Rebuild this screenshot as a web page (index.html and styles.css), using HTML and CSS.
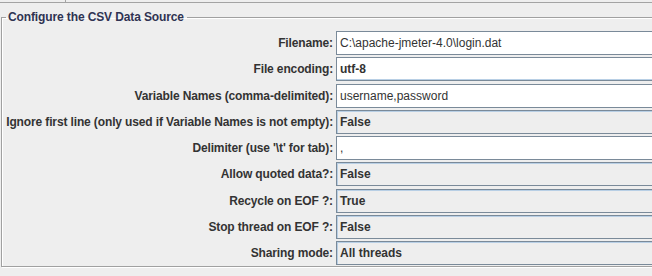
FILE: index.html
```html
<!DOCTYPE html>
<html lang="en">
<head>
<meta charset="UTF-8">
<title>CSV Data Set Config</title>
<link rel="stylesheet" href="styles.css">
</head>
<body>
    <div class="top-strip">
        <div class="top-tab"></div>
    </div>
    <fieldset class="group">
        <legend>Configure the CSV Data Source</legend>
        <div class="form">
            <label>Filename:</label>
            <div class="field text">C:\apache-jmeter-4.0\login.dat</div>

            <label>File encoding:</label>
            <div class="field edit-combo">utf-8</div>

            <label>Variable Names (comma-delimited):</label>
            <div class="field text">username,password</div>

            <label>Ignore first line (only used if Variable Names is not empty):</label>
            <div class="field combo">False</div>

            <label>Delimiter (use '\t' for tab):</label>
            <div class="field text">,</div>

            <label>Allow quoted data?:</label>
            <div class="field combo">False</div>

            <label>Recycle on EOF ?:</label>
            <div class="field combo">True</div>

            <label>Stop thread on EOF ?:</label>
            <div class="field combo">False</div>

            <label>Sharing mode:</label>
            <div class="field combo">All threads</div>
        </div>
    </fieldset>
</body>
</html>
```

FILE: styles.css
```css
body{
    margin:0;
    background:#eeeeee;
    font-family:"Liberation Sans", Arial, sans-serif;
    font-size:12px;
    color:#333333;
    overflow:hidden;
    width:652px;
    height:276px;
}

.top-strip{
    height:2px;
    border-bottom:1px solid #a3a3a3;
}
.top-tab{
    width:65px;
    height:2px;
    border-right:1px solid #a3a3a3;
}

.group{
    margin:7px 0 0 1px;
    padding:0 0 1px 0;
    width:700px;
    border:1px solid #a0a0a0;
    box-shadow:inset 1px 1px 0 #ffffff, 1px 1px 0 #ffffff;
}
.group legend{
    margin-left:4px;
    padding:0 3px 0 2px;
    font-weight:bold;
    line-height:14px;
    color:#2f3352;
    letter-spacing:-0.12px;
}

.form{
    display:grid;
    grid-template-columns:331px 1fr;
    column-gap:3px;
    row-gap:2.25px;
    padding-top:7px;
}
.form label{
    height:24px;
    line-height:24px;
    text-align:right;
    font-weight:bold;
    white-space:nowrap;
    letter-spacing:-0.13px;
}

.field{
    height:24px;
    line-height:24px;
    box-sizing:border-box;
    padding-left:3px;
    border:1px solid #7a8a99;
    white-space:nowrap;
}
.text{
    background:#ffffff;
    line-height:22px;
}
.edit-combo{
    background:#ffffff;
    font-weight:bold;
    line-height:22px;
    box-shadow:inset 0 -1px 0 #b8cfe5, inset -1px 0 0 #b8cfe5;
}
.combo{
    background:#eeeeee;
    font-weight:bold;
    line-height:22px;
    box-shadow:inset 1px 1px 0 #b8cfe5;
}
```
